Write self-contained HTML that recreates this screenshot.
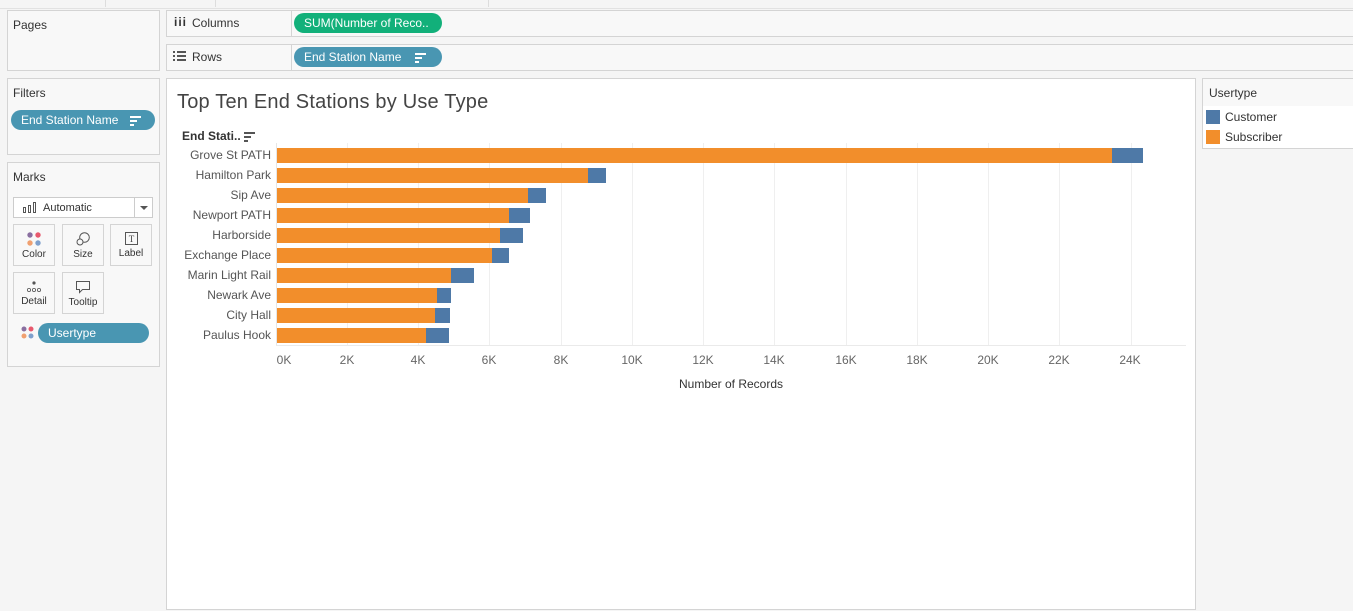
<!DOCTYPE html>
<html><head><style>
*{margin:0;padding:0;box-sizing:border-box}
body{width:1353px;height:611px;background:#f5f5f5;font-family:"Liberation Sans",sans-serif;position:relative;overflow:hidden;color:#333}
.p{position:absolute;border:1px solid #d4d4d4;background:#f8f8f8}
.t{position:absolute;font-size:12px;color:#333}
.pill{position:absolute;height:20px;border-radius:10px;color:#fff;font-size:12px;line-height:20px;padding-left:10px}
.g{position:absolute;top:143px;width:1px;height:202px;background:#efefef}
.lab{position:absolute;right:1082px;font-size:12px;color:#555;text-align:right;white-space:nowrap}
.bo{position:absolute;height:15px;background:#f28e2b}
.bb{position:absolute;height:15px;background:#4e79a7}
.ax{position:absolute;top:353px;font-size:12px;color:#666;transform:translateX(-50%)}
.mb{position:absolute;width:42px;height:42px;border:1px solid #d4d4d4;background:#f8f8f8;font-size:10px;text-align:center}
.sort{display:inline-block;vertical-align:middle}
</style></head><body>
<div style="position:absolute;left:105px;top:0;width:1px;height:7px;background:#ddd"></div>
<div style="position:absolute;left:215px;top:0;width:1px;height:7px;background:#ddd"></div>
<div style="position:absolute;left:488px;top:0;width:1px;height:7px;background:#ddd"></div>
<div style="position:absolute;left:0;top:8px;width:1353px;height:1px;background:#e2e2e2"></div>

<div class="p" style="left:7px;top:10px;width:153px;height:61px"></div>
<div class="t" style="left:13px;top:18px">Pages</div>

<div class="p" style="left:166px;top:10px;width:1190px;height:27px"></div>
<div style="position:absolute;left:291px;top:10px;width:1px;height:27px;background:#d4d4d4"></div>
<div class="t" style="left:174px;top:15px;font-weight:bold;letter-spacing:1px">iii</div>
<div class="t" style="left:192px;top:16px">Columns</div>
<div class="pill" style="left:294px;top:13px;width:148px;background:#12b07a">SUM(Number of Reco..</div>

<div class="p" style="left:166px;top:44px;width:1190px;height:27px"></div>
<div style="position:absolute;left:291px;top:44px;width:1px;height:27px;background:#d4d4d4"></div>
<svg style="position:absolute;left:173px;top:51px" width="13" height="11"><g fill="#555"><rect x="0" y="0" width="2" height="2"/><rect x="4" y="0" width="9" height="2"/><rect x="0" y="4" width="2" height="2"/><rect x="4" y="4" width="9" height="2"/><rect x="0" y="8" width="2" height="2"/><rect x="4" y="8" width="9" height="2"/></g></svg>
<div class="t" style="left:192px;top:50px">Rows</div>
<div class="pill" style="left:294px;top:47px;width:148px;background:#4996b2">End Station Name <svg class="sort" style="margin-left:10px" width="11" height="10"><g fill="#fff"><rect y="0" width="11" height="2"/><rect y="4" width="7" height="2"/><rect y="8" width="4" height="2"/></g></svg></div>

<div class="p" style="left:7px;top:78px;width:153px;height:77px"></div>
<div class="t" style="left:13px;top:86px">Filters</div>
<div class="pill" style="left:11px;top:110px;width:144px;background:#4996b2">End Station Name <svg class="sort" style="margin-left:8px" width="11" height="10"><g fill="#fff"><rect y="0" width="11" height="2"/><rect y="4" width="7" height="2"/><rect y="8" width="4" height="2"/></g></svg></div>

<div class="p" style="left:7px;top:162px;width:153px;height:205px"></div>
<div class="t" style="left:13px;top:170px">Marks</div>
<div style="position:absolute;left:13px;top:197px;width:140px;height:21px;border:1px solid #ccc;background:#fff;font-size:11px;line-height:20px;padding-left:29px">Automatic</div>
<svg style="position:absolute;left:23px;top:202px" width="14" height="11"><g fill="none" stroke="#555"><rect x="0.5" y="5.5" width="2" height="5"/><rect x="5.5" y="3.5" width="2" height="7"/><rect x="10.5" y="0.5" width="2" height="10"/></g></svg>
<div style="position:absolute;left:134px;top:197px;width:1px;height:21px;background:#ccc"></div>
<div style="position:absolute;left:140px;top:206px;border-left:4px solid transparent;border-right:4px solid transparent;border-top:4px solid #555"></div>
<div class="mb" style="left:13px;top:224px"><svg style="margin-top:7px" width="14" height="14"><circle cx="3" cy="3" r="2.7" fill="#8a6fa0"/><circle cx="11" cy="3" r="2.7" fill="#e8596d"/><circle cx="3" cy="11" r="2.7" fill="#f0a070"/><circle cx="11" cy="11" r="2.7" fill="#7fa0cc"/></svg><div>Color</div></div>
<div class="mb" style="left:62px;top:224px"><svg style="margin-top:7px" width="14" height="14"><circle cx="8.5" cy="5.5" r="4.8" fill="none" stroke="#555"/><circle cx="4" cy="10" r="3" fill="#f8f8f8" stroke="#555"/></svg><div>Size</div></div>
<div class="mb" style="left:110px;top:224px"><svg style="margin-top:7px" width="13" height="13"><rect x="0.5" y="0.5" width="12" height="12" fill="none" stroke="#555"/><text x="6.5" y="10" font-size="9" text-anchor="middle" fill="#444" font-family="Liberation Serif">T</text></svg><div>Label</div></div>
<div class="mb" style="left:13px;top:272px"><svg style="margin-top:8px" width="16" height="12"><circle cx="8" cy="2" r="1.6" fill="#555"/><circle cx="3" cy="9" r="1.6" fill="none" stroke="#555" stroke-width=".8"/><circle cx="8" cy="9" r="1.6" fill="none" stroke="#555" stroke-width=".8"/><circle cx="13" cy="9" r="1.6" fill="none" stroke="#555" stroke-width=".8"/></svg><div>Detail</div></div>
<div class="mb" style="left:62px;top:272px"><svg style="margin-top:7px" width="16" height="14"><path d="M1.5 1.5h13v8h-7l-3 3v-3h-3z" fill="none" stroke="#555"/></svg><div>Tooltip</div></div>
<svg style="position:absolute;left:21px;top:326px" width="13" height="13"><circle cx="3" cy="3" r="2.5" fill="#8a6fa0"/><circle cx="10" cy="3" r="2.5" fill="#e8596d"/><circle cx="3" cy="10" r="2.5" fill="#f0a070"/><circle cx="10" cy="10" r="2.5" fill="#7fa0cc"/></svg>
<div class="pill" style="left:38px;top:323px;width:111px;background:#4996b2">Usertype</div>

<div class="p" style="left:166px;top:78px;width:1030px;height:532px;background:#fff"></div>
<div style="position:absolute;left:177px;top:91px;font-size:20px;color:#444;letter-spacing:0.2px">Top Ten End Stations by Use Type</div>
<div style="position:absolute;left:182px;top:129px;font-size:12px;font-weight:bold;color:#333">End Stati.. <svg class="sort" width="11" height="10"><g fill="#555"><rect y="0" width="11" height="2"/><rect y="4" width="7" height="2"/><rect y="8" width="4" height="2"/></g></svg></div>

<div class="g" style="left:347px"></div><div class="g" style="left:418px"></div><div class="g" style="left:489px"></div><div class="g" style="left:561px"></div><div class="g" style="left:632px"></div><div class="g" style="left:703px"></div><div class="g" style="left:774px"></div><div class="g" style="left:846px"></div><div class="g" style="left:917px"></div><div class="g" style="left:988px"></div><div class="g" style="left:1059px"></div><div class="g" style="left:1131px"></div>
<div style="position:absolute;left:276px;top:143px;width:1px;height:203px;background:#e6e6e6"></div>
<div style="position:absolute;left:276px;top:345px;width:910px;height:1px;background:#eaeaea"></div>

<div class="lab" style="top:148px">Grove St PATH</div>
<div class="lab" style="top:168px">Hamilton Park</div>
<div class="lab" style="top:188px">Sip Ave</div>
<div class="lab" style="top:208px">Newport PATH</div>
<div class="lab" style="top:228px">Harborside</div>
<div class="lab" style="top:248px">Exchange Place</div>
<div class="lab" style="top:268px">Marin Light Rail</div>
<div class="lab" style="top:288px">Newark Ave</div>
<div class="lab" style="top:308px">City Hall</div>
<div class="lab" style="top:328px">Paulus Hook</div>

<div class="bo" style="left:277px;top:148px;width:835px"></div><div class="bb" style="left:1112px;top:148px;width:31px"></div>
<div class="bo" style="left:277px;top:168px;width:311px"></div><div class="bb" style="left:588px;top:168px;width:18px"></div>
<div class="bo" style="left:277px;top:188px;width:251px"></div><div class="bb" style="left:528px;top:188px;width:18px"></div>
<div class="bo" style="left:277px;top:208px;width:232px"></div><div class="bb" style="left:509px;top:208px;width:21px"></div>
<div class="bo" style="left:277px;top:228px;width:223px"></div><div class="bb" style="left:500px;top:228px;width:23px"></div>
<div class="bo" style="left:277px;top:248px;width:215px"></div><div class="bb" style="left:492px;top:248px;width:17px"></div>
<div class="bo" style="left:277px;top:268px;width:174px"></div><div class="bb" style="left:451px;top:268px;width:23px"></div>
<div class="bo" style="left:277px;top:288px;width:160px"></div><div class="bb" style="left:437px;top:288px;width:14px"></div>
<div class="bo" style="left:277px;top:308px;width:158px"></div><div class="bb" style="left:435px;top:308px;width:15px"></div>
<div class="bo" style="left:277px;top:328px;width:149px"></div><div class="bb" style="left:426px;top:328px;width:23px"></div>

<div class="ax" style="left:284px">0K</div><div class="ax" style="left:347px">2K</div><div class="ax" style="left:418px">4K</div><div class="ax" style="left:489px">6K</div><div class="ax" style="left:561px">8K</div><div class="ax" style="left:632px">10K</div><div class="ax" style="left:703px">12K</div><div class="ax" style="left:774px">14K</div><div class="ax" style="left:846px">16K</div><div class="ax" style="left:917px">18K</div><div class="ax" style="left:988px">20K</div><div class="ax" style="left:1059px">22K</div><div class="ax" style="left:1130px">24K</div>
<div style="position:absolute;left:731px;top:377px;font-size:12px;color:#333;transform:translateX(-50%)">Number of Records</div>

<div class="p" style="left:1202px;top:78px;width:160px;height:71px;background:#fff"></div>
<div style="position:absolute;left:1203px;top:79px;width:160px;height:27px;background:#f8f8f8"></div>
<div class="t" style="left:1209px;top:86px">Usertype</div>
<div style="position:absolute;left:1206px;top:110px;width:14px;height:14px;background:#4e79a7"></div>
<div class="t" style="left:1225px;top:110px">Customer</div>
<div style="position:absolute;left:1206px;top:130px;width:14px;height:14px;background:#f28e2b"></div>
<div class="t" style="left:1225px;top:130px">Subscriber</div>
</body></html>
